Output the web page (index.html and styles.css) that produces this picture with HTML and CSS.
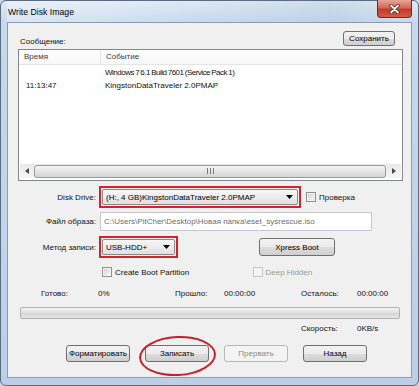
FILE: index.html
```html
<!DOCTYPE html>
<html lang="ru">
<head>
    <meta charset="UTF-8">
    <title>Write Disk Image</title>
    <link rel="stylesheet" href="styles.css">
</head>
<body>
    <div class="window">
        <div class="titlebar">
            <span class="title">Write Disk Image</span>
            <div class="close">
                <svg width="13" height="10" viewBox="0 0 13 10">
                    <path d="M3 1.5 L10 8.5 M10 1.5 L3 8.5" stroke="#5a1f1a" stroke-width="3.4" stroke-linecap="round"/>
                    <path d="M3 1.5 L10 8.5 M10 1.5 L3 8.5" stroke="#fff" stroke-width="1.8" stroke-linecap="round"/>
                </svg>
            </div>
        </div>

        <div class="client">
            <div class="msg-head">
                <span>Сообщение:</span>
                <button class="btn save">Сохранить</button>
            </div>

            <div class="listview">
                <div class="lv-header">
                    <div class="c-time">Время</div>
                    <div class="c-event">Событие</div>
                </div>
                <div class="lv-body">
                    <div class="lv-row">
                        <div class="c-time"></div>
                        <div class="c-event tight">Windows 7 6.1 Build 7601 (Service Pack 1)</div>
                    </div>
                    <div class="lv-row">
                        <div class="c-time">11:13:47</div>
                        <div class="c-event">KingstonDataTraveler 2.0PMAP</div>
                    </div>
                </div>
                <div class="hscroll">
                    <div class="arrow">
                        <svg width="4" height="6" viewBox="0 0 4 6"><polygon points="4,0 4,6 0,3" fill="#4a4a4a"/></svg>
                    </div>
                    <div class="thumb">
                        <svg width="7" height="6" viewBox="0 0 7 6">
                            <path d="M0.5 0 V6 M3.5 0 V6 M6.5 0 V6" stroke="#7a7a7a" stroke-width="1"/>
                        </svg>
                    </div>
                    <div class="arrow">
                        <svg width="4" height="6" viewBox="0 0 4 6"><polygon points="0,0 0,6 4,3" fill="#4a4a4a"/></svg>
                    </div>
                </div>
            </div>

            <div class="row row-drive">
                <div class="lbl">Disk Drive:</div>
                <div class="redbox drive-box">
                    <div class="combo">
                        <span>(H:, 4 GB)KingstonDataTraveler 2.0PMAP</span>
                        <svg width="7" height="4" viewBox="0 0 7 4"><polygon points="0,0 7,0 3.5,4" fill="#000"/></svg>
                    </div>
                </div>
                <span class="check check-verify"></span>
                <span class="check-text">Проверка</span>
            </div>

            <div class="row row-file">
                <div class="lbl">Файл образа:</div>
                <div class="textbox">C:\Users\PitCher\Desktop\Новая папка\eset_sysrescue.iso</div>
            </div>

            <div class="row row-method">
                <div class="lbl">Метод записи:</div>
                <div class="redbox method-box">
                    <div class="combo">
                        <span>USB-HDD+</span>
                        <svg width="7" height="4" viewBox="0 0 7 4"><polygon points="0,0 7,0 3.5,4" fill="#000"/></svg>
                    </div>
                </div>
                <button class="btn xpress">Xpress Boot</button>
            </div>

            <div class="row row-checks">
                <div class="check-item">
                    <span class="check"></span>
                    <span class="check-text">Create Boot Partition</span>
                </div>
                <div class="check-item disabled">
                    <span class="check"></span>
                    <span class="check-text">Deep Hidden</span>
                </div>
            </div>

            <div class="status">
                <span>Готово:</span>
                <span>0%</span>
                <span>Прошло:</span>
                <span>00:00:00</span>
                <span>Осталось:</span>
                <span>00:00:00</span>
            </div>

            <div class="progress"></div>

            <div class="status speed">
                <span></span>
                <span></span>
                <span></span>
                <span></span>
                <span>Скорость:</span>
                <span>0KB/s</span>
            </div>

            <div class="actions">
                <button class="btn action">Форматировать</button>
                <button class="btn action">Записать</button>
                <button class="btn action" disabled>Прервать</button>
                <button class="btn action">Назад</button>
                <div class="circle"></div>
            </div>
        </div>
    </div>
</body>
</html>
```

FILE: styles.css
```css
* {
    box-sizing: border-box;
}
body {
    margin: 0;
    font-family: "Liberation Sans", Arial, sans-serif;
    font-size: 8px;
    color: #111;
    background: #c6d8ec;
}
.window {
    width: 419px;
    height: 386px;
    display: flex;
    flex-direction: column;
    padding: 0 6px 7px 6px;
    border: 1px solid #5b6c80;
    border-radius: 6px;
    background: linear-gradient(to bottom, #dfe9f4 0px, #c6d9ed 22px, #bbd0e8 100%);
}
.titlebar {
    height: 21px;
    display: flex;
    justify-content: space-between;
    align-items: flex-start;
    background: linear-gradient(to right, rgba(255, 255, 255, 0.35), rgba(255, 255, 255, 0) 45%, rgba(160, 185, 210, 0.25) 80%, rgba(255, 255, 255, 0));
}
.title {
    font-size: 8.7px;
    color: #000;
    padding: 6px 0 0 1px;
}
.close {
    width: 35px;
    height: 18px;
    margin-top: -1px;
    display: flex;
    align-items: center;
    justify-content: center;
    border: 1px solid #6a2b25;
    border-top: none;
    border-radius: 0 0 4px 4px;
    background: linear-gradient(to bottom, #e8a597 0%, #d46a55 45%, #c23a25 55%, #d35d45 100%);
}
.client {
    flex: 1;
    display: flex;
    flex-direction: column;
    padding: 8px 8px 0 10px;
    background: #f0f0f0;
    border: 1px solid #8b9cb0;
}

/* buttons */
.btn {
    font: inherit;
    color: #000;
    padding: 0;
    border: 1px solid #707070;
    border-radius: 3px;
    background: linear-gradient(to bottom, #f2f2f2 0%, #ebebeb 50%, #dddddd 51%, #cfcfcf 100%);
}
.btn:disabled {
    color: #8a8a8a;
    border-color: #b5b9bc;
    background: #f4f4f4;
}
.msg-head {
    height: 15px;
    display: flex;
    justify-content: space-between;
    align-items: flex-end;
    padding: 0 8px 0 2px;
}
.save {
    width: 52px;
    height: 15px;
}

/* list view */
.listview {
    margin-top: 3px;
    height: 132px;
    display: flex;
    flex-direction: column;
    background: #fff;
    border: 1px solid #828790;
}
.lv-header {
    height: 15px;
    display: flex;
    color: #3b3b3b;
    border-bottom: 1px solid #e5e5e5;
    background: linear-gradient(to bottom, #ffffff, #f6f7f9);
}
.lv-header .c-time {
    width: 82px;
    padding-left: 5px;
    border-right: 1px solid #e2e5ea;
    line-height: 14px;
}
.lv-header .c-event {
    padding-left: 5px;
    line-height: 14px;
}
.lv-body {
    flex: 1;
    padding-top: 1px;
}
.lv-row {
    height: 13px;
    display: flex;
    align-items: center;
}
.lv-row .c-time {
    width: 82px;
    padding-left: 7px;
}
.lv-row .c-event {
    padding-left: 4px;
}
.tight {
    letter-spacing: -0.5px;
    word-spacing: -0.5px;
}
.hscroll {
    height: 14px;
    margin: 0 1px 2px 1px;
    display: flex;
    align-items: center;
    background: linear-gradient(to bottom, #e9e9e9, #f4f4f4);
}
.hscroll .arrow {
    width: 14px;
    display: flex;
    justify-content: center;
}
.hscroll .thumb {
    flex: 1;
    height: 13px;
    margin-right: 1px;
    display: flex;
    align-items: center;
    justify-content: center;
    border: 1px solid #9b9b9b;
    border-radius: 3px;
    background: linear-gradient(to bottom, #f5f5f5 0%, #e6e6e6 50%, #d4d4d4 100%);
}

/* form rows */
.row {
    display: flex;
    align-items: center;
}
.lbl {
    width: 78px;
    text-align: right;
    margin-right: 3px;
}
.row-drive {
    margin-top: 5px;
}
.redbox {
    padding: 1px;
    border: 2px solid #d6222c;
}
.drive-box {
    width: 202px;
}
.method-box {
    width: 79px;
}
.combo {
    height: 16px;
    display: flex;
    align-items: center;
    justify-content: space-between;
    padding: 0 4px 0 3px;
    border: 1px solid #8a8a8a;
    border-radius: 2px;
    background: linear-gradient(to bottom, #f6f6f6 0%, #ececec 50%, #e0e0e0 100%);
    color: #000;
}
.check {
    width: 10px;
    height: 10px;
    border: 1px solid #8e8f8f;
    background: linear-gradient(135deg, #d2d2d2, #f7f7f7);
    box-shadow: inset 0 0 0 1px #f3f3f3;
}
.check-verify {
    margin-left: 5px;
}
.check-text {
    margin-left: 3px;
}
.row-file {
    margin-top: 4px;
}
.textbox {
    width: 272px;
    height: 19px;
    margin-left: 1px;
    padding-left: 3px;
    display: flex;
    align-items: center;
    color: #6f6f6f;
    background: #fff;
    border: 1px solid #c5c8cc;
}
.row-method {
    margin-top: 5px;
}
.xpress {
    width: 76px;
    height: 18px;
    margin-left: 81px;
}
.row-checks {
    margin-top: 9px;
    padding-left: 84px;
}
.check-item {
    width: 157px;
    display: flex;
    align-items: center;
}
.check-item.disabled .check {
    border-color: #c9c9c9;
    background: #f4f4f4;
    box-shadow: none;
}
.check-item.disabled .check-text {
    color: #9a9a9a;
}

/* progress */
.status {
    height: 10px;
    margin-top: 11px;
    padding-left: 23px;
    display: grid;
    grid-template-columns: 57px 77px 49px 77px 56px auto;
    align-items: center;
}
.progress {
    height: 12px;
    margin: 9px 3px 0 2px;
    border: 1px solid #b2b2b2;
    border-radius: 2px;
    background: linear-gradient(to bottom, #f1f1f1 0%, #e2e2e2 45%, #d6d6d6 55%, #e4e4e4 100%);
}
.speed {
    margin-top: 4px;
}

/* bottom buttons */
.actions {
    position: relative;
    margin-top: 12px;
    padding-left: 48px;
    display: flex;
    gap: 15px;
}
.action {
    width: 64px;
    height: 17px;
}
.circle {
    position: absolute;
    left: 121px;
    top: -9px;
    width: 77px;
    height: 40px;
    border: 2px solid #c8202a;
    border-radius: 50%;
    transform: rotate(-3deg);
}
```
